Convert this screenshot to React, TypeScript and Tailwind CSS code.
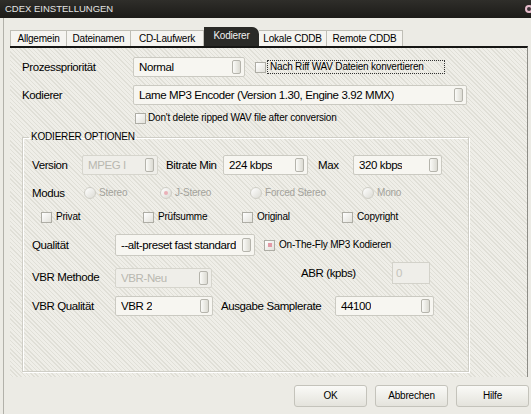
import React from "react";

// Small "skin" font used for tabs, checkboxes and buttons.
const SMALL = "font-['Liberation_Sans',sans-serif] text-[10px] leading-[12px] tracking-[-0.2px] whitespace-nowrap";
// Regular label / field font.
const LABEL = "font-['Liberation_Sans',sans-serif] text-[11.5px] leading-[15px] tracking-[-0.4px] whitespace-nowrap";

function Thumb() {
  return (
    <span className="mr-[3px] ml-auto h-[14px] w-[9px] shrink-0 rounded-[2px] border border-[#b5b4ac] bg-gradient-to-r from-[#fbfbf8] to-[#dcdbd3]" />
  );
}

function Select({
  value,
  className,
  disabled = false,
}: {
  value: string;
  className: string;
  disabled?: boolean;
}) {
  return (
    <div
      className={`flex shrink-0 items-center rounded-[2px] border pl-[5px] ${LABEL} ${
        disabled
          ? "border-[#d6d5cd] bg-[#efeee9] text-[#b9b8b0]"
          : "border-[#cbcac2] bg-[#f7f6f1] text-black"
      } ${className}`}
    >
      <span className="truncate">{value}</span>
      <Thumb />
    </div>
  );
}

function Checkbox({ checked = false }: { checked?: boolean }) {
  return (
    <span className="flex h-[11px] w-[11px] shrink-0 items-center justify-center border border-[#aeada5] bg-gradient-to-br from-[#ffffff] to-[#e2e1da]">
      {checked ? <span className="h-[4px] w-[4px] bg-[#e39aa6]" /> : null}
    </span>
  );
}

function Radio({ checked = false }: { checked?: boolean }) {
  return (
    <span className="flex h-[12px] w-[12px] shrink-0 items-center justify-center rounded-full border border-[#cfcec6] bg-gradient-to-br from-[#ffffff] to-[#dcdbd4]">
      {checked ? <span className="h-[4px] w-[4px] rounded-full bg-[#eab0b8]" /> : null}
    </span>
  );
}

function Tab({ label, className, active = false }: { label: string; className: string; active?: boolean }) {
  if (active) {
    return (
      <div
        className={`flex h-[19px] items-center justify-center rounded-tr-[7px] bg-[#2a2a27] pb-[2px] text-[#f2f2f2] ${SMALL} ${className}`}
      >
        {label}
      </div>
    );
  }
  return (
    <div
      className={`flex h-[16px] items-center justify-center border-t border-r border-[#bfbeb6] bg-[#f5f4f0] ${SMALL} ${className}`}
    >
      {label}
    </div>
  );
}

function Button({ children }: { children: React.ReactNode }) {
  return (
    <button
      type="button"
      className={`h-[22px] w-[73px] rounded-[3px] border border-[#c4c3bb] bg-gradient-to-b from-[#fafaf7] to-[#e4e3dc] ${SMALL}`}
    >
      {children}
    </button>
  );
}

export default function App() {
  return (
    <div className="flex h-[414px] w-[531px] flex-col overflow-hidden bg-[#ecebe5] text-black">
      {/* title bar */}
      <div className="flex h-[18px] shrink-0 items-center bg-gradient-to-b from-[#2f2e2a] to-[#1c1b18] pl-[5px]">
        <span className="font-['Liberation_Sans',sans-serif] text-[9.5px] text-[#e4e4e4]">CDEX EINSTELLUNGEN</span>
        <span className="ml-auto -mr-[2px] h-[8px] w-[8px] rounded-full border-2 border-[#e6bccb] bg-[#3b3136]" />
      </div>

      <div className="ml-[3px] flex flex-1 flex-col border-l border-[#b2b1aa] pl-[6px]">
        {/* tabs */}
        <div className="mt-[9px] flex h-[19px] items-end">
          <Tab label="Allgemein" className="w-[57px] border-l" />
          <Tab label="Dateinamen" className="w-[64px]" />
          <Tab label="CD-Laufwerk" className="w-[73px]" />
          <Tab label="Kodierer" className="w-[55px]" active />
          <Tab label="Lokale CDDB" className="w-[68px]" />
          <Tab label="Remote CDDB" className="w-[76px]" />
        </div>

        {/* panel */}
        <div className="flex h-[331px] w-[518px] flex-col border-t-2 border-r border-t-[#161614] border-r-[#8d8c86] bg-[repeating-linear-gradient(45deg,#efeee8_0px,#efeee8_2px,#e0dfd7_2px,#e0dfd7_3px)] bg-fixed pt-[9px] pl-[12px]">
          <div className="flex h-[20px] items-center">
            <span className={`w-[111px] ${LABEL}`}>Prozesspriorität</span>
            <Select value="Normal" className="h-[20px] w-[112px]" />
            <span className="ml-[10px]">
              <Checkbox />
            </span>
            <span
              className={`ml-[1px] flex h-[14px] w-[178px] items-center border border-dotted border-[#333] pl-[2px] ${SMALL}`}
            >
              Nach Riff WAV Dateien konvertieren
            </span>
          </div>

          <div className="mt-[8px] flex h-[20px] items-center">
            <span className={`w-[111px] ${LABEL}`}>Kodierer</span>
            <Select value="Lame MP3 Encoder (Version 1.30, Engine 3.92 MMX)" className="h-[20px] w-[334px]" />
          </div>

          <div className="mt-[7px] flex h-[12px] items-center pl-[113px]">
            <Checkbox />
            <span className={`ml-[2px] ${SMALL}`}>Don&apos;t delete ripped WAV file after conversion</span>
          </div>

          {/* encoder options */}
          <fieldset className="mt-[8px] h-[240px] w-[447px] border border-[#cfcec6] pt-[13px] pl-[9px] shadow-[inset_1px_1px_0_#ffffff,1px_1px_0_#ffffff]">
            <legend className="-ml-[3px] px-[2px] font-['Liberation_Sans',sans-serif] text-[10px] leading-[10px] tracking-[-0.2px]">
              KODIERER OPTIONEN
            </legend>

            <div className="flex h-[20px] items-center">
              <span className={`w-[50px] ${LABEL}`}>Version</span>
              <Select value="MPEG I" className="h-[20px] w-[76px]" disabled />
              <span className={`ml-[8px] w-[57px] ${LABEL}`}>Bitrate Min</span>
              <Select value="224 kbps" className="h-[20px] w-[85px]" />
              <span className={`ml-[10px] w-[35px] ${LABEL}`}>Max</span>
              <Select value="320 kbps" className="h-[20px] w-[89px]" />
            </div>

            <div className="mt-[11px] flex h-[14px] items-center">
              <span className={`w-[52px] ${LABEL}`}>Modus</span>
              <span className={`flex w-[76px] items-center gap-[3px] text-[#a3a29b] ${SMALL}`}>
                <Radio /> Stereo
              </span>
              <span className={`flex w-[90px] items-center gap-[3px] text-[#a3a29b] ${SMALL}`}>
                <Radio checked /> J-Stereo
              </span>
              <span className={`flex w-[112px] items-center gap-[3px] text-[#a3a29b] ${SMALL}`}>
                <Radio /> Forced Stereo
              </span>
              <span className={`flex items-center gap-[3px] text-[#a3a29b] ${SMALL}`}>
                <Radio /> Mono
              </span>
            </div>

            <div className={`mt-[11px] flex h-[12px] items-center pl-[9px] ${SMALL}`}>
              <span className="flex w-[102px] items-center gap-[4px]">
                <Checkbox /> Privat
              </span>
              <span className="flex w-[99px] items-center gap-[4px]">
                <Checkbox /> Prüfsumme
              </span>
              <span className="flex w-[100px] items-center gap-[4px]">
                <Checkbox /> Original
              </span>
              <span className="flex items-center gap-[4px]">
                <Checkbox /> Copyright
              </span>
            </div>

            <div className="mt-[11px] flex h-[22px] items-center">
              <span className={`w-[83px] ${LABEL}`}>Qualität</span>
              <Select value="--alt-preset fast standard" className="h-[22px] w-[140px]" />
              <span className={`ml-[9px] flex items-center gap-[4px] ${SMALL}`}>
                <Checkbox checked /> On-The-Fly MP3 Kodieren
              </span>
            </div>

            <div className="mt-[6px] flex h-[26px] items-start">
              <span className={`mt-[8px] w-[83px] ${LABEL}`}>VBR Methode</span>
              <Select value="VBR-Neu" className="mt-[6px] h-[20px] w-[97px]" disabled />
              <span className={`mt-[4px] ml-[89px] w-[91px] ${LABEL}`}>ABR (kpbs)</span>
              <div
                className={`flex h-[22px] w-[38px] items-center border border-[#d3d2ca] bg-[#efeee9] pl-[3px] text-[#c4c3bb] ${LABEL}`}
              >
                0
              </div>
            </div>

            <div className="mt-[8px] flex h-[20px] items-center">
              <span className={`w-[83px] ${LABEL}`}>VBR Qualität</span>
              <Select value="VBR 2" className="h-[20px] w-[98px]" />
              <span className={`ml-[8px] w-[114px] ${LABEL}`}>Ausgabe Samplerate</span>
              <Select value="44100" className="h-[20px] w-[99px]" />
            </div>
          </fieldset>
        </div>

        {/* dialog buttons */}
        <div className="flex justify-end gap-[8px] pt-[8px] pr-[2px]">
          <Button>OK</Button>
          <Button>Abbrechen</Button>
          <Button>Hilfe</Button>
        </div>
      </div>
    </div>
  );
}
